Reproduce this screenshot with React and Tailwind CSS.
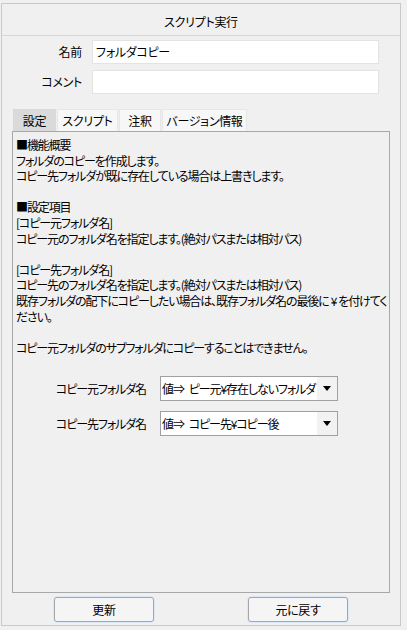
import React from 'react';

const FONT =
  "font-['Meiryo_UI','Noto_Sans_CJK_JP',sans-serif] [font-feature-settings:'palt']";

const DESCRIPTION = [
  '■機能概要',
  'フォルダのコピーを作成します。',
  'コピー先フォルダが既に存在している場合は上書きします。',
  '',
  '■設定項目',
  '[コピー元フォルダ名]',
  'コピー元のフォルダ名を指定します。(絶対パスまたは相対パス)',
  '',
  '[コピー先フォルダ名]',
  'コピー先のフォルダ名を指定します。(絶対パスまたは相対パス)',
  <>
    既存フォルダの配下にコピーしたい場合は、既存フォルダ名の最後に
    <span className="mx-[2px]">¥</span>を付けてく
  </>,
  'ださい。',
  '',
  'コピー元フォルダのサブフォルダにコピーすることはできません。'
];

const TABS = [
  { label: '設定', width: 'w-[43px]', active: true },
  { label: 'スクリプト', width: 'w-[61px]' },
  { label: '注釈', width: 'w-[42px]' },
  { label: 'バージョン情報', width: 'w-[85px]' }
];

function FieldRow({ label, value, className }) {
  return (
    <div className={`flex items-center h-[24px] ${className}`}>
      <div className="w-[80px] text-right">{label}</div>
      <div className="ml-[10px] w-[287px] h-full bg-white border border-[#e3e3e3] flex items-center px-[3px]">
        {value}
      </div>
    </div>
  );
}

function ValueSelect({ label, value, className }) {
  return (
    <div className={`flex items-center ${className}`}>
      <div className="w-[130px] text-right">{label}</div>
      <div className="ml-[14px] w-[178px] h-[25px] border border-[#a0a0a0] flex overflow-hidden">
        <div className="flex-1 bg-white flex items-center pl-[1px] whitespace-nowrap overflow-hidden">
          <span>値⇒</span>
          <span className="ml-[5px]">{value}</span>
        </div>
        <div className="w-[20px] bg-[#f2f2f2] flex items-center justify-center">
          <svg width="8" height="5" viewBox="0 0 8 5">
            <path d="M0 0h8L4 5z" fill="#000" />
          </svg>
        </div>
      </div>
    </div>
  );
}

function Button({ children }) {
  return (
    <button className="w-[100px] h-[25px] rounded-[3px] border border-[#a6a6a6] bg-[#f5f5f5] shadow-[0_0_0_1px_#dce8f5] text-black">
      {children}
    </button>
  );
}

export default function App() {
  return (
    <div className={`w-[407px] h-[630px] bg-[#f0f0f0] pt-[3px] pl-[1px] text-[12px] text-black tracking-[-0.3px] ${FONT}`}>
      <div className="w-[400px] h-[623px] border border-[#c9c9c9] flex flex-col">
        <div className="h-[32px] border-b border-[#d6d6d6] flex items-center justify-center pt-[5px]">
          スクリプト実行
        </div>

        <FieldRow label="名前" value="フォルダコピー" className="mt-[4px]" />
        <FieldRow label="コメント" value="" className="mt-[6px]" />

        <div className="mt-[15px] ml-[11px] flex gap-[1px] h-[22px]">
          {TABS.map((tab) => (
            <div
              key={tab.label}
              className={`${tab.width} flex items-center justify-center pt-[1px] ${
                tab.active
                  ? 'bg-[#dadada]'
                  : 'bg-[#f7f7f7] border border-b-0 border-[#e6e6e6]'
              }`}
            >
              {tab.label}
            </div>
          ))}
        </div>

        <div className="ml-[10px] w-[378px] h-[462px] border border-[#a8a8a8] pt-[5px] pl-[3px] overflow-hidden tracking-[-1.1px]">
          {DESCRIPTION.map((line, i) => (
            <div key={i} className="h-[15.6px] leading-[15.6px] whitespace-nowrap">
              {line}
            </div>
          ))}

          <ValueSelect
            label="コピー元フォルダ名"
            value="ピー元¥存在しないフォルダ"
            className="mt-[21px]"
          />
          <ValueSelect
            label="コピー先フォルダ名"
            value="コピー先¥コピー後"
            className="mt-[10px]"
          />
        </div>

        <div className="mt-[4px] flex justify-center gap-[94px]">
          <Button>更新</Button>
          <Button>元に戻す</Button>
        </div>
      </div>
    </div>
  );
}
